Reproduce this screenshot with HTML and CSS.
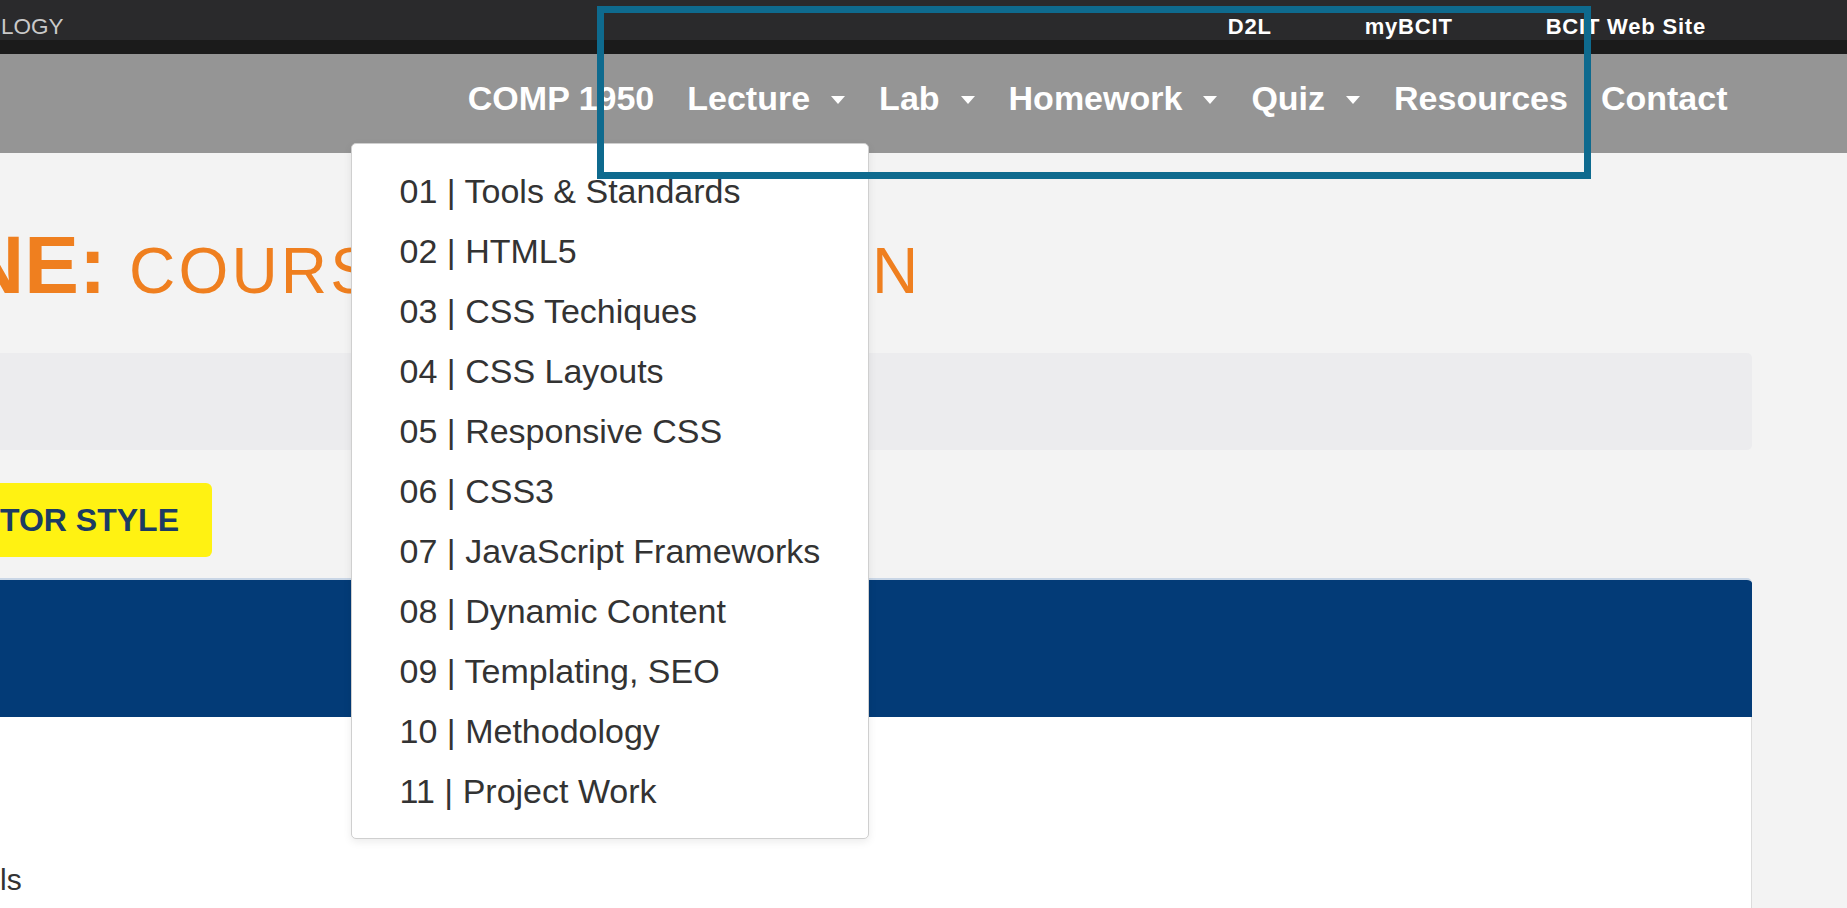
FILE: index.html
```html
<!DOCTYPE html>
<html lang="en">
<head>
<meta charset="utf-8">
<title>COMP 1950</title>
<link rel="stylesheet" href="styles.css">
</head>
<body>
<div class="page">
  <header class="topbar">
    <span class="inst">LOGY</span>
    <nav class="toplinks">
      <a class="toplink" href="#">D2L</a>
      <a class="toplink" href="#">myBCIT</a>
      <a class="toplink" href="#">BCIT Web Site</a>
    </nav>
  </header>
  <nav class="mainnav">
    <ul class="navlist">
      <li class="navitem"><a class="navlink" href="#">COMP 1950</a></li>
      <li class="navitem open">
        <a class="navlink" href="#">Lecture<span class="caret"></span></a>
        <ul class="dropdown">
          <li><a class="dd-link" href="#">01 | Tools &amp; Standards</a></li>
          <li><a class="dd-link" href="#">02 | HTML5</a></li>
          <li><a class="dd-link" href="#">03 | CSS Techiques</a></li>
          <li><a class="dd-link" href="#">04 | CSS Layouts</a></li>
          <li><a class="dd-link" href="#">05 | Responsive CSS</a></li>
          <li><a class="dd-link" href="#">06 | CSS3</a></li>
          <li><a class="dd-link" href="#">07 | JavaScript Frameworks</a></li>
          <li><a class="dd-link" href="#">08 | Dynamic Content</a></li>
          <li><a class="dd-link" href="#">09 | Templating, SEO</a></li>
          <li><a class="dd-link" href="#">10 | Methodology</a></li>
          <li><a class="dd-link" href="#">11 | Project Work</a></li>
        </ul>
      </li>
      <li class="navitem"><a class="navlink" href="#">Lab<span class="caret"></span></a></li>
      <li class="navitem"><a class="navlink" href="#">Homework<span class="caret"></span></a></li>
      <li class="navitem"><a class="navlink" href="#">Quiz<span class="caret"></span></a></li>
      <li class="navitem"><a class="navlink" href="#">Resources</a></li>
      <li class="navitem"><a class="navlink" href="#">Contact</a></li>
    </ul>
  </nav>
  <main class="main">
    <h1 class="title"><span class="title-bold">NE: </span><span class="title-rest">COURSE INFORMATION</span></h1>
    <div class="well"></div>
    <a class="btn-yellow" href="#">TOR STYLE</a>
    <section class="panel">
      <div class="panel-heading"></div>
      <div class="panel-body">
        <p class="body-text">ls</p>
      </div>
    </section>
  </main>
  <div class="annotation"></div>
</div>
</body>
</html>
```

FILE: styles.css
```css
* { box-sizing: border-box; }

html, body {
  margin: 0;
  padding: 0;
  background: #f3f3f3;
  overflow: hidden;
  font-family: "Liberation Sans", Arial, Helvetica, sans-serif;
}

.page {
  position: relative;
  width: 1847px;
  height: 908px;
  overflow: hidden;
}

a { text-decoration: none; }

/* ---------- top bar ---------- */
.topbar {
  height: 54px;
  background: #2a2a2c;
  border-bottom: 14px solid #1b1b1b;
  display: flex;
  justify-content: space-between;
  align-items: flex-start;
  padding: 16px 141px 0 0;
  line-height: 22px;
}

.inst {
  font-size: 22.5px;
  color: #c9c9c9;
  padding-left: 1px;
}

.toplinks {
  display: flex;
  gap: 93px;
}

.toplink {
  color: #ffffff;
  font-weight: bold;
  font-size: 22px;
  letter-spacing: 0.8px;
}

/* ---------- main nav ---------- */
.mainnav {
  height: 99px;
  background: #959595;
  padding: 0 103px 10px 0;
  display: flex;
  justify-content: flex-end;
}

.navlist {
  list-style: none;
  margin: 0;
  padding: 0;
  display: flex;
  align-items: stretch;
}

.navitem {
  position: relative;
  display: flex;
}

.navlink {
  display: flex;
  align-items: center;
  padding: 0 16.5px;
  color: #ffffff;
  font-weight: bold;
  font-size: 34px;
  white-space: nowrap;
}

.caret {
  display: inline-block;
  width: 0;
  height: 0;
  margin: 3px 1px 0 21px;
  border-top: 8px solid #ffffff;
  border-left: 7.5px solid transparent;
  border-right: 7.5px solid transparent;
}

/* ---------- dropdown ---------- */
.dropdown {
  position: absolute;
  top: 100%;
  right: -6px;
  z-index: 10;
  width: 518px;
  margin: 0;
  padding: 17px 0;
  list-style: none;
  background: #ffffff;
  border: 1px solid #cfcfcf;
  border-radius: 5px;
  box-shadow: 0 3px 8px rgba(0, 0, 0, 0.08);
}

.dd-link {
  display: block;
  padding: 0 48px;
  line-height: 60px;
  font-size: 34px;
  color: #333333;
  white-space: nowrap;
}

/* ---------- main content ---------- */
.main {
  padding: 0 95px 0 0;
}

.title {
  margin: 71px 0 0 -35px;
  line-height: 1;
  color: #ef7f1f;
  white-space: nowrap;
  font-weight: normal;
}

.title-bold {
  font-size: 82px;
  font-weight: bold;
}

.title-rest {
  font-size: 64px;
  letter-spacing: 3.2px;
}

.well {
  margin: 47px 0 0 -10px;
  height: 97px;
  background: #ececee;
  border-radius: 5px;
}

.btn-yellow {
  display: flex;
  align-items: center;
  width: fit-content;
  height: 74px;
  margin: 33px 0 0 -20px;
  padding: 0 33px 0 20px;
  background: #fff212;
  border-radius: 6px;
  color: #1c3b63;
  font-weight: bold;
  font-size: 32px;
  white-space: nowrap;
}

.panel {
  margin: 21px 0 0 -10px;
  border-top: 2px solid #c9d6e6;
  border-top-right-radius: 5px;
  overflow: hidden;
}

.panel-heading {
  height: 137px;
  background: #033b77;
}

.panel-body {
  background: #ffffff;
  border-right: 1px solid #dcdcdc;
  padding: 142px 0 40px 10px;
}

.body-text {
  margin: 0;
  font-size: 30px;
  line-height: 42px;
  color: #333333;
}

/* ---------- screenshot annotation overlay ---------- */
.annotation {
  position: absolute;
  left: 597px;
  top: 6px;
  width: 994px;
  height: 173px;
  border: 7px solid #0e6a8e;
  z-index: 20;
  pointer-events: none;
}
```
